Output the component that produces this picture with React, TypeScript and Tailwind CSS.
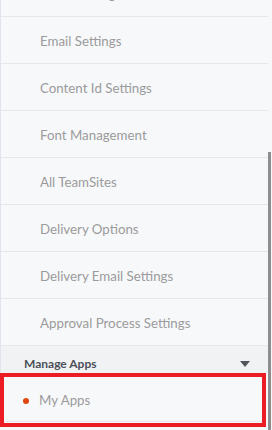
import React from 'react';

const items = [
  'Label Settings',
  'Email Settings',
  'Content Id Settings',
  'Font Management',
  'All TeamSites',
  'Delivery Options',
  'Delivery Email Settings',
  'Approval Process Settings',
];

function NavRow({ label }: { label: string }) {
  return (
    <div className="h-[47px] shrink-0 flex items-center pt-[4px] pl-[39px] border-b border-[#e6e8eb] border-l border-l-[#dfe5ec] text-[13.3px] text-[#9b9b9b]">
      {label}
    </div>
  );
}

export default function App() {
  return (
    <div
      className="relative w-[272px] h-[430px] overflow-hidden bg-[#f7f8fa]"
      style={{ fontFamily: 'Lato, "Open Sans", sans-serif' }}
    >
      <div className="flex flex-col -mt-[30px] w-[268px]">
        {items.map((label) => (
          <NavRow key={label} label={label} />
        ))}

        {/* section header */}
        <div className="h-[27px] flex items-center justify-between pt-[9px] pl-[23px] pr-[18px] bg-[#f1f2f4] border-l border-l-[#dfe5ec]">
          <span className="text-[12px] font-bold text-[#4b5058]">Manage Apps</span>
          <span className="w-0 h-0 border-l-[5px] border-r-[5px] border-t-[6px] border-l-transparent border-r-transparent border-t-[#51565c]" />
        </div>

        {/* highlighted item */}
        <div className="w-[266px] h-[54px] border-4 border-[#ec1c24] bg-[#f7f8fa]">
          <div className="h-[45px] flex items-center gap-[10px] pt-[4px] pl-[19px] border-b border-[#e6e8eb]">
            <span className="w-[6px] h-[6px] rounded-full bg-[#e0460f]" />
            <span className="text-[13.3px] text-[#9b9b9b]">My Apps</span>
          </div>
        </div>
      </div>

      {/* scrollbar thumb */}
      <div className="absolute right-[1px] top-[152px] bottom-0 w-[3px] bg-[#8e8e8e]" />
    </div>
  );
}
